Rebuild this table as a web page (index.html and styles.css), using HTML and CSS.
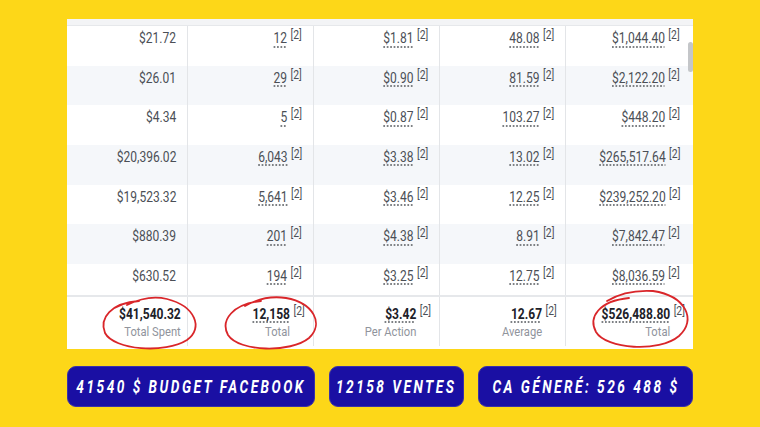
FILE: index.html
```html
<!DOCTYPE html>
<html lang="fr">
<head>
<meta charset="utf-8">
<title>Résultats Facebook</title>
<link rel="stylesheet" href="styles.css">
</head>
<body>
<div class="page">
  <div class="stage">
    <div class="panel">
      <div class="head-strip"></div>
      <div class="row">
        <div class="cell c1"><span class="in">$21.72</span></div>
        <div class="cell c2"><span class="in"><span class="val">12</span><span class="ref">[2]</span></span></div>
        <div class="cell c3"><span class="in"><span class="val">$1.81</span><span class="ref">[2]</span></span></div>
        <div class="cell c4"><span class="in"><span class="val">48.08</span><span class="ref">[2]</span></span></div>
        <div class="cell c5"><span class="in"><span class="val">$1,044.40</span><span class="ref">[2]</span></span></div>
      </div>
      <div class="row alt">
        <div class="cell c1"><span class="in">$26.01</span></div>
        <div class="cell c2"><span class="in"><span class="val">29</span><span class="ref">[2]</span></span></div>
        <div class="cell c3"><span class="in"><span class="val">$0.90</span><span class="ref">[2]</span></span></div>
        <div class="cell c4"><span class="in"><span class="val">81.59</span><span class="ref">[2]</span></span></div>
        <div class="cell c5"><span class="in"><span class="val">$2,122.20</span><span class="ref">[2]</span></span></div>
      </div>
      <div class="row">
        <div class="cell c1"><span class="in">$4.34</span></div>
        <div class="cell c2"><span class="in"><span class="val">5</span><span class="ref">[2]</span></span></div>
        <div class="cell c3"><span class="in"><span class="val">$0.87</span><span class="ref">[2]</span></span></div>
        <div class="cell c4"><span class="in"><span class="val">103.27</span><span class="ref">[2]</span></span></div>
        <div class="cell c5"><span class="in"><span class="val">$448.20</span><span class="ref">[2]</span></span></div>
      </div>
      <div class="row alt">
        <div class="cell c1"><span class="in">$20,396.02</span></div>
        <div class="cell c2"><span class="in"><span class="val">6,043</span><span class="ref">[2]</span></span></div>
        <div class="cell c3"><span class="in"><span class="val">$3.38</span><span class="ref">[2]</span></span></div>
        <div class="cell c4"><span class="in"><span class="val">13.02</span><span class="ref">[2]</span></span></div>
        <div class="cell c5"><span class="in"><span class="val">$265,517.64</span><span class="ref">[2]</span></span></div>
      </div>
      <div class="row">
        <div class="cell c1"><span class="in">$19,523.32</span></div>
        <div class="cell c2"><span class="in"><span class="val">5,641</span><span class="ref">[2]</span></span></div>
        <div class="cell c3"><span class="in"><span class="val">$3.46</span><span class="ref">[2]</span></span></div>
        <div class="cell c4"><span class="in"><span class="val">12.25</span><span class="ref">[2]</span></span></div>
        <div class="cell c5"><span class="in"><span class="val">$239,252.20</span><span class="ref">[2]</span></span></div>
      </div>
      <div class="row alt">
        <div class="cell c1"><span class="in">$880.39</span></div>
        <div class="cell c2"><span class="in"><span class="val">201</span><span class="ref">[2]</span></span></div>
        <div class="cell c3"><span class="in"><span class="val">$4.38</span><span class="ref">[2]</span></span></div>
        <div class="cell c4"><span class="in"><span class="val">8.91</span><span class="ref">[2]</span></span></div>
        <div class="cell c5"><span class="in"><span class="val">$7,842.47</span><span class="ref">[2]</span></span></div>
      </div>
      <div class="row last">
        <div class="cell c1"><span class="in">$630.52</span></div>
        <div class="cell c2"><span class="in"><span class="val">194</span><span class="ref">[2]</span></span></div>
        <div class="cell c3"><span class="in"><span class="val">$3.25</span><span class="ref">[2]</span></span></div>
        <div class="cell c4"><span class="in"><span class="val">12.75</span><span class="ref">[2]</span></span></div>
        <div class="cell c5"><span class="in"><span class="val">$8,036.59</span><span class="ref">[2]</span></span></div>
      </div>
      <div class="row foot">
        <div class="cell c1"><span class="in"><span class="fstack"><span class="fval plain">$41,540.32</span><span class="flabel">Total Spent</span></span></span></div>
        <div class="cell c2"><span class="in"><span class="fstack"><span class="fval">12,158</span><span class="flabel">Total</span></span><span class="ref">[2]</span></span></div>
        <div class="cell c3"><span class="in"><span class="fstack"><span class="fval">$3.42</span><span class="flabel">Per Action</span></span><span class="ref">[2]</span></span></div>
        <div class="cell c4"><span class="in"><span class="fstack"><span class="fval">12.67</span><span class="flabel">Average</span></span><span class="ref">[2]</span></span></div>
        <div class="cell c5"><span class="in"><span class="fstack"><span class="fval">$526,488.80</span><span class="flabel">Total</span></span><span class="ref">[2]</span></span></div>
      </div>
      <div class="scroll-thumb"></div>
    </div>
    <svg class="marks" width="640" height="345" viewBox="0 0 640 345" aria-hidden="true">
      <path d="M72 282 C 44 284, 32 299, 38 314 C 47 331, 98 335, 120 321 C 137 309, 128 287, 100 280 C 88 277, 74 279, 60 286" fill="none" stroke="#d9262a" stroke-width="1.8" stroke-linecap="round"/>
      <path d="M194 282 C 166 285, 153 301, 161 316 C 172 333, 224 334, 242 319 C 257 305, 247 284, 219 279 C 206 277, 192 279, 178 287" fill="none" stroke="#d9262a" stroke-width="1.8" stroke-linecap="round"/>
      <path d="M562 279 C 532 282, 521 298, 529 313 C 539 330, 592 334, 612 317 C 630 301, 619 277, 586 272 C 569 271, 553 274, 540 282" fill="none" stroke="#d9262a" stroke-width="1.8" stroke-linecap="round"/>
    </svg>
  </div>
  <div class="tags">
    <div class="tag t1"><span class="tag-text">41540 $ BUDGET FACEBOOK</span></div>
    <div class="tag t2"><span class="tag-text">12158 VENTES</span></div>
    <div class="tag t3"><span class="tag-text">CA GÉNERÉ: 526 488 $</span></div>
  </div>
</div>
</body>
</html>
```

FILE: styles.css
```css
* { box-sizing: border-box; }

html, body {
  margin: 0;
  padding: 0;
}

body {
  width: 760px;
  height: 427px;
  background: #fdd718;
  font-family: Roboto, "Liberation Sans", Arial, sans-serif;
  overflow: hidden;
}

.page {
  padding: 19px 0 0 67px;
}

.stage {
  position: relative;
  width: 626px;
}

.panel {
  position: relative;
  width: 626px;
  height: 330px;
  background: #ffffff;
  overflow: hidden;
  display: flex;
  flex-direction: column;
}

.head-strip {
  height: 7px;
  background: #f3f4f6;
  border-bottom: 1px solid #e6e8eb;
  flex: none;
}

.row {
  display: flex;
  height: 39.67px;
  flex: none;
  background: #ffffff;
}

.row.alt {
  background: #f5f7fa;
}

.row.last {
  height: 31px;
}

.cell {
  display: flex;
  justify-content: flex-end;
  align-items: flex-start;
  padding: 4px 11px 0 0;
  font-size: 14px;
  line-height: 17px;
  color: #4b4f56;
  border-right: 1px solid #e3e5e8;
}

.c1 { width: 121px; }
.c2 { width: 126px; }
.c3 { width: 126px; }
.c4 { width: 126px; }
.c5 { width: 127px; border-right: none; padding-right: 13px; }

.in {
  display: inline-flex;
  align-items: flex-start;
  white-space: nowrap;
  transform: scaleX(0.86);
  transform-origin: right top;
}

.val {
  text-decoration: underline dotted #7d8084;
  text-decoration-thickness: 1.5px;
  text-underline-offset: 3px;
}

.ref {
  font-size: 12px;
  line-height: 12px;
  margin-left: 4px;
  margin-top: -1px;
  color: #4b4f56;
}

.row.foot {
  height: 51px;
  border-top: 2px solid #e6e8eb;
}

.foot .cell {
  padding-top: 9px;
  padding-right: 8px;
}

.foot .c1 {
  padding-right: 6px;
}

.fstack {
  display: flex;
  flex-direction: column;
  align-items: flex-end;
}

.fval {
  font-weight: 700;
  color: #1d2129;
  font-size: 14px;
  line-height: 17px;
  text-decoration: underline dotted #7d8084;
  text-decoration-thickness: 1.5px;
  text-underline-offset: 3px;
}

.fval.plain {
  text-decoration: none;
}

.flabel {
  margin-top: 1px;
  color: #90949c;
  font-size: 13px;
  line-height: 16px;
}

.scroll-thumb {
  position: absolute;
  right: 0;
  top: 23px;
  width: 5px;
  height: 30px;
  border-radius: 3px;
  background: #c4c6c9;
}

.marks {
  position: absolute;
  left: 0;
  top: 0;
  overflow: visible;
  pointer-events: none;
}

.tags {
  display: flex;
  gap: 14px;
  margin-top: 17px;
}

.tag {
  height: 41px;
  border-radius: 9px;
  background: #1a0fa3;
  border: 1px solid #3a31a8;
  display: flex;
  align-items: center;
  justify-content: center;
  overflow: hidden;
}

.t1 { width: 248px; }
.t2 { width: 135px; }
.t3 { width: 215px; }

.tag-text {
  display: inline-block;
  white-space: nowrap;
  color: #ffffff;
  font-family: Roboto, "DejaVu Sans", sans-serif;
  font-weight: 700;
  font-style: italic;
  font-size: 17.5px;
  letter-spacing: 3.2px;
  transform: scaleX(0.78);
  transform-origin: center;
}
```
